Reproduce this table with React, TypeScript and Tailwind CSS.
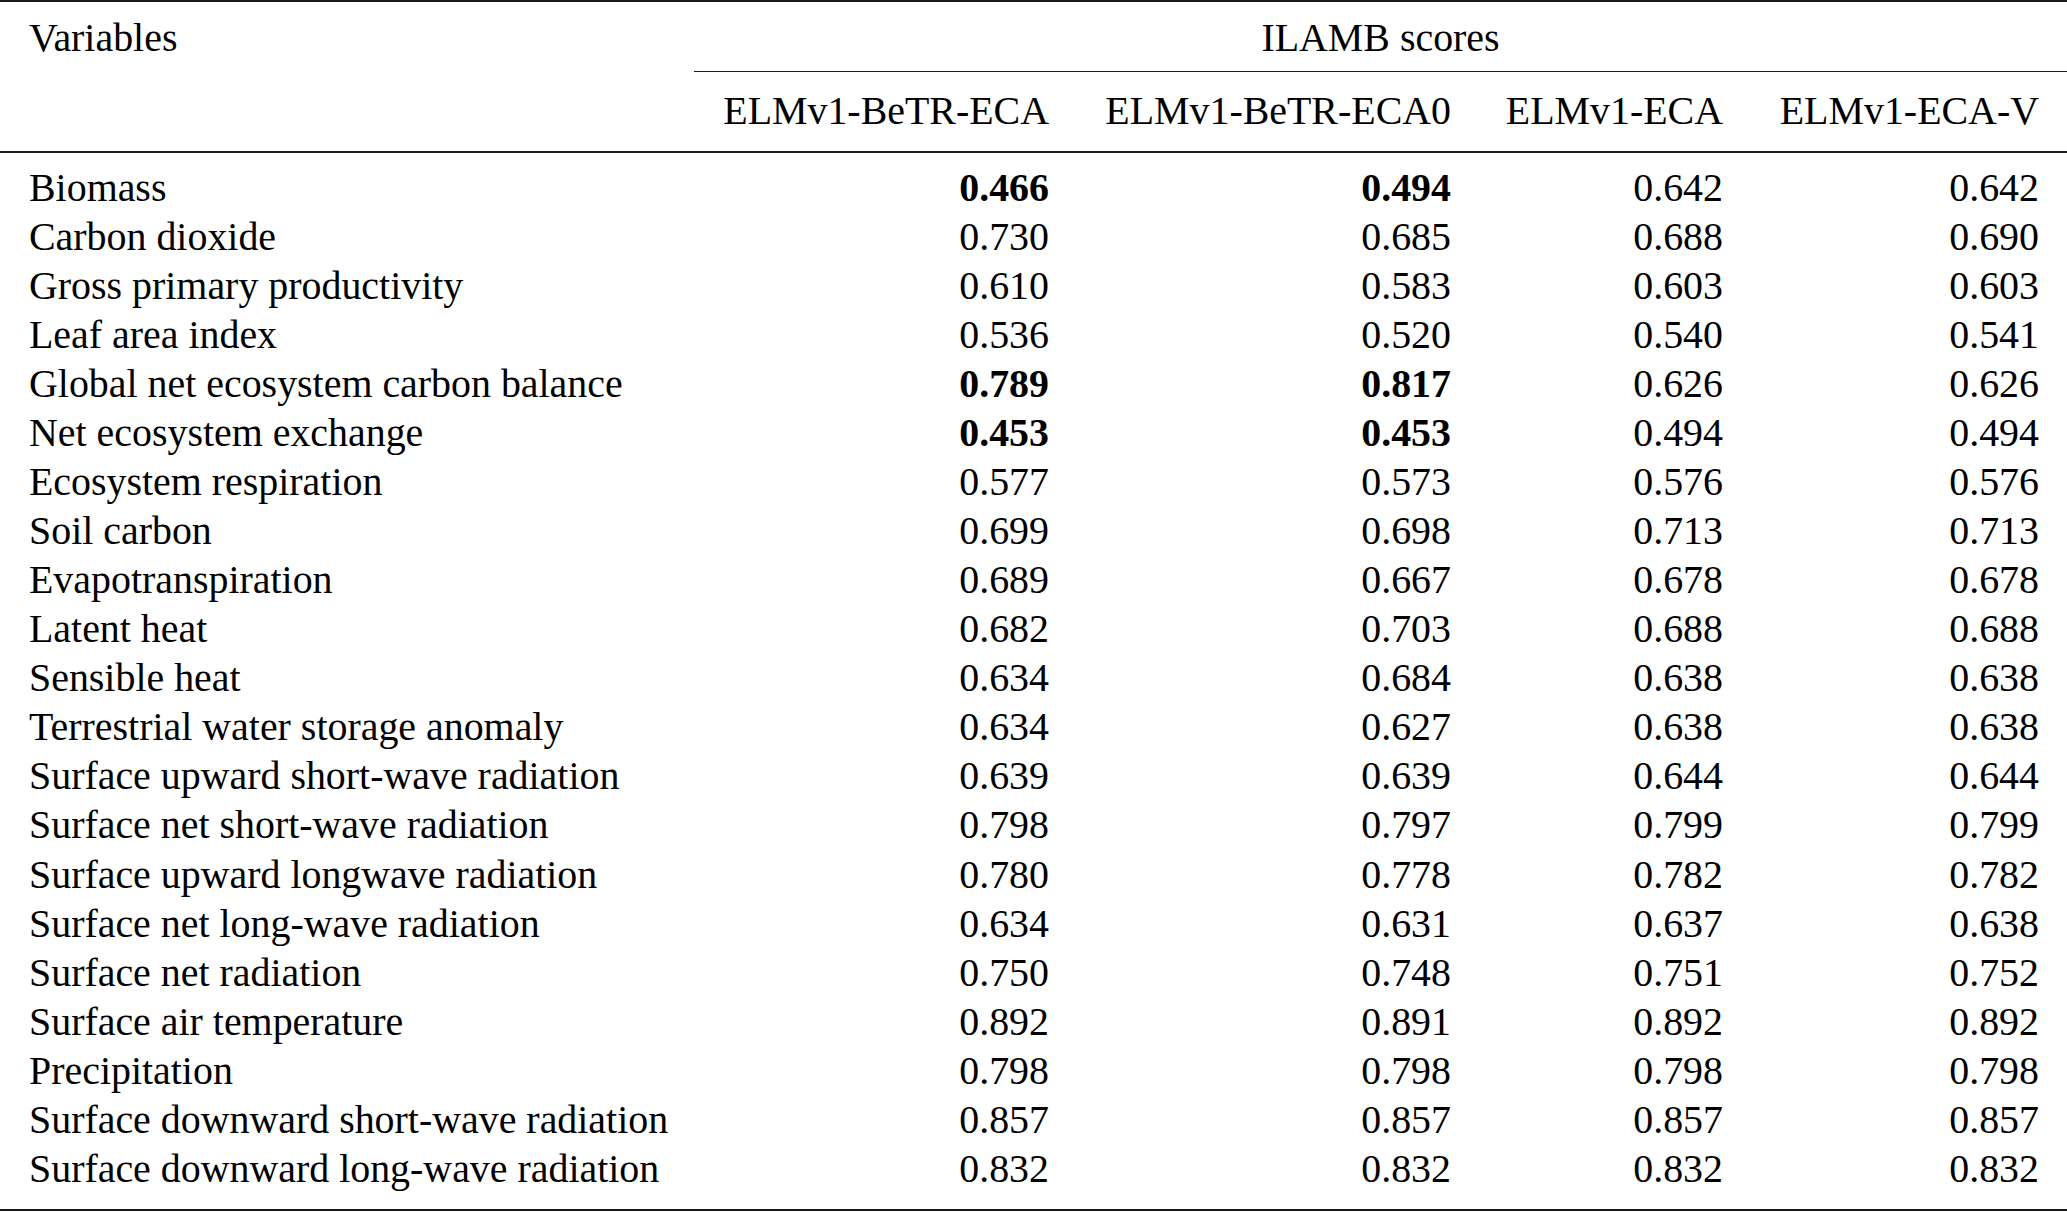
type Row = { name: string; scores: string[]; bold?: number[] }

const models = ['ELMv1-BeTR-ECA', 'ELMv1-BeTR-ECA0', 'ELMv1-ECA', 'ELMv1-ECA-V']

const rows: Row[] = [
  { name: 'Biomass', scores: ['0.466', '0.494', '0.642', '0.642'], bold: [0, 1] },
  { name: 'Carbon dioxide', scores: ['0.730', '0.685', '0.688', '0.690'] },
  { name: 'Gross primary productivity', scores: ['0.610', '0.583', '0.603', '0.603'] },
  { name: 'Leaf area index', scores: ['0.536', '0.520', '0.540', '0.541'] },
  { name: 'Global net ecosystem carbon balance', scores: ['0.789', '0.817', '0.626', '0.626'], bold: [0, 1] },
  { name: 'Net ecosystem exchange', scores: ['0.453', '0.453', '0.494', '0.494'], bold: [0, 1] },
  { name: 'Ecosystem respiration', scores: ['0.577', '0.573', '0.576', '0.576'] },
  { name: 'Soil carbon', scores: ['0.699', '0.698', '0.713', '0.713'] },
  { name: 'Evapotranspiration', scores: ['0.689', '0.667', '0.678', '0.678'] },
  { name: 'Latent heat', scores: ['0.682', '0.703', '0.688', '0.688'] },
  { name: 'Sensible heat', scores: ['0.634', '0.684', '0.638', '0.638'] },
  { name: 'Terrestrial water storage anomaly', scores: ['0.634', '0.627', '0.638', '0.638'] },
  { name: 'Surface upward short-wave radiation', scores: ['0.639', '0.639', '0.644', '0.644'] },
  { name: 'Surface net short-wave radiation', scores: ['0.798', '0.797', '0.799', '0.799'] },
  { name: 'Surface upward longwave radiation', scores: ['0.780', '0.778', '0.782', '0.782'] },
  { name: 'Surface net long-wave radiation', scores: ['0.634', '0.631', '0.637', '0.638'] },
  { name: 'Surface net radiation', scores: ['0.750', '0.748', '0.751', '0.752'] },
  { name: 'Surface air temperature', scores: ['0.892', '0.891', '0.892', '0.892'] },
  { name: 'Precipitation', scores: ['0.798', '0.798', '0.798', '0.798'] },
  { name: 'Surface downward short-wave radiation', scores: ['0.857', '0.857', '0.857', '0.857'] },
  { name: 'Surface downward long-wave radiation', scores: ['0.832', '0.832', '0.832', '0.832'] },
]

export default function App() {
  return (
    <div className="w-[2067px] min-h-screen bg-white">
      <table className="w-[2067px] table-fixed border-separate border-spacing-0 border-t-2 border-b-2 border-[#1a1a1a] text-black text-[39.9px] leading-[49.07px] font-['Liberation_Serif','Times_New_Roman',serif]">
        <colgroup>
          <col className="w-[694px]" />
          <col className="w-[382px]" />
          <col className="w-[402px]" />
          <col className="w-[272px]" />
          <col className="w-[317px]" />
        </colgroup>
        <thead>
          <tr>
            <th className="pl-[29px] pt-[10.5px] pb-[10px] align-top text-left font-normal whitespace-nowrap">
              Variables
            </th>
            <th
              colSpan={4}
              className="pt-[10.5px] pb-[8.5px] align-top text-center font-normal whitespace-nowrap border-b-[1.5px] border-[#1a1a1a]"
            >
              ILAMB scores
            </th>
          </tr>
          <tr>
            <th className="pt-[14.5px] pb-[15.5px] align-top border-b-2 border-[#1a1a1a]" />
            {models.map((m, i) => (
              <th
                key={m}
                className={
                  i === 3
                    ? 'pr-[28px] pt-[14.5px] pb-[15.5px] align-top text-right font-normal whitespace-nowrap border-b-2 border-[#1a1a1a]'
                    : 'pr-[27px] pt-[14.5px] pb-[15.5px] align-top text-right font-normal whitespace-nowrap border-b-2 border-[#1a1a1a]'
                }
              >
                {m}
              </th>
            ))}
          </tr>
        </thead>
        <tbody>
          {rows.map((r, ri) => {
            const pad = ri === 0 ? 'pt-[10px]' : ri === rows.length - 1 ? 'pb-[16px]' : ''
            return (
              <tr key={r.name}>
                <td className={`pl-[29px] align-top text-left whitespace-nowrap ${pad}`}>{r.name}</td>
                {r.scores.map((s, ci) => (
                  <td
                    key={ci}
                    className={`${ci === 3 ? 'pr-[28px]' : 'pr-[27px]'} align-top text-right whitespace-nowrap ${pad} ${
                      r.bold?.includes(ci) ? 'font-bold' : 'font-normal'
                    }`}
                  >
                    {s}
                  </td>
                ))}
              </tr>
            )
          })}
        </tbody>
      </table>
    </div>
  )
}
